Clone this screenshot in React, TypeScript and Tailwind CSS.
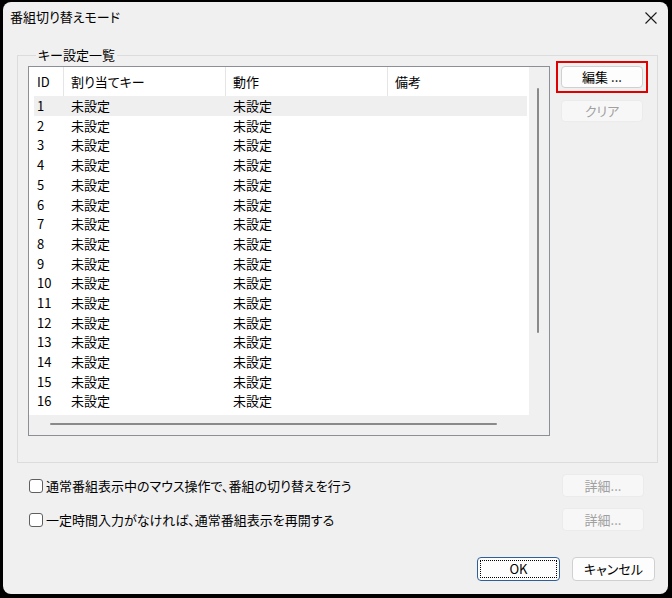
import React from 'react'

const rows = Array.from({ length: 16 }, (_, i) => ({ id: i + 1, key: '未設定', action: '未設定', note: '' }))

function Btn({ label, disabled, primary, className = '' }: { label: string; disabled?: boolean; primary?: boolean; className?: string }) {
  if (disabled) {
    return (
      <div className={`flex items-center justify-center rounded-[4px] border border-[#ebebeb] bg-[#f7f7f7] text-[#a0a0a0] ${className}`}>
        {label}
      </div>
    )
  }
  if (primary) {
    return (
      <div className={`flex items-center justify-center rounded-[4px] border border-[#2d5f9a] bg-[#fdfdfd] p-[2px] ${className}`}>
        <div className="flex h-full w-full items-center justify-center border border-dotted border-black">{label}</div>
      </div>
    )
  }
  return (
    <div className={`flex items-center justify-center rounded-[4px] border border-[#d0d0d0] bg-[#fdfdfd] ${className}`}>
      {label}
    </div>
  )
}

function Check({ label }: { label: string }) {
  return (
    <div className="flex items-center">
      <div className="h-[14px] w-[14px] rounded-[3px] border border-[#5f5f5f] bg-white" />
      <span className="ml-[3px]">{label}</span>
    </div>
  )
}

export default function App() {
  return (
    <div className="h-[598px] w-[672px] bg-black pb-[4px] pl-[3px] pr-[4px] pt-[2px] text-[13px] text-black [font-family:'Noto_Sans_CJK_JP',sans-serif] [font-feature-settings:'palt']">
      <div className="flex h-full flex-col rounded-[8px] bg-[#f0f0f0]">
        {/* Title bar */}
        <div className="flex h-[30px] items-center justify-between pl-[7px] pr-[11px]">
          <span className="text-[13px]">番組切り替えモード</span>
          <svg width="12" height="12" viewBox="0 0 12 12" className="mt-[1px]">
            <path d="M0.5 0.5 L11.5 11.5 M11.5 0.5 L0.5 11.5" stroke="#1a1a1a" strokeWidth="1.1" />
          </svg>
        </div>

        {/* Group box */}
        <fieldset className="ml-[14px] mr-[10px] mt-[15px] border border-[#dcdcdc] pb-[26px] pl-[10px]">
          <legend className="ml-[8px] px-[2px] leading-[16px]">キー設定一覧</legend>
          <div className="mt-[3px] flex">
            {/* List view */}
            <div className="grid h-[370px] w-[522px] grid-cols-[500px_20px] grid-rows-[348px_20px] border border-[#8c8f95] bg-[#f0f0f0]">
              <div className="bg-white">
                <div className="grid h-[29px] grid-cols-[35px_162px_162px_1fr] items-center">
                  <div className="flex h-full items-center border-r border-[#e5e5e5] pl-[8px]">ID</div>
                  <div className="flex h-full items-center border-r border-[#e5e5e5] pl-[7px]">割り当てキー</div>
                  <div className="flex h-full items-center border-r border-[#e5e5e5] pl-[7px]">動作</div>
                  <div className="flex h-full items-center pl-[7px]">備考</div>
                </div>
                {rows.map(r => (
                  <div
                    key={r.id}
                    className={`ml-[5px] mr-[2px] grid h-[19.7px] grid-cols-[30px_162px_162px_1fr] items-center ${r.id === 1 ? 'bg-[#efefef]' : ''}`}
                  >
                    <span className="pl-[3px]">{r.id}</span>
                    <span className="pl-[7px]">{r.key}</span>
                    <span className="pl-[7px]">{r.action}</span>
                    <span className="pl-[7px]">{r.note}</span>
                  </div>
                ))}
              </div>
              {/* vertical scrollbar */}
              <div className="pl-[8px] pt-[21px]">
                <div className="h-[245px] w-[2px] rounded-full bg-[#8a8a8a]" />
              </div>
              {/* horizontal scrollbar */}
              <div className="pl-[21px] pt-[8px]">
                <div className="h-[2px] w-[447px] rounded-full bg-[#8a8a8a]" />
              </div>
              <div />
            </div>

            {/* Side buttons */}
            <div className="ml-[11px] flex flex-col gap-[12px]">
              <div className="relative">
                <Btn label="編集 ..." className="h-[22px] w-[82px]" />
                <span className="absolute -inset-[5px] border-2 border-[#e00000]" />
              </div>
              <Btn label="クリア" disabled className="h-[22px] w-[82px]" />
            </div>
          </div>
        </fieldset>

        {/* Options */}
        <div className="mt-[11px] flex flex-col gap-[11px] pl-[26px] pr-[24px]">
          <div className="flex h-[23px] items-center justify-between">
            <Check label="通常番組表示中のマウス操作で、番組の切り替えを行う" />
            <Btn label="詳細..." disabled className="h-[23px] w-[82px]" />
          </div>
          <div className="flex h-[23px] items-center justify-between">
            <Check label="一定時間入力がなければ、通常番組表示を再開する" />
            <Btn label="詳細..." disabled className="h-[23px] w-[82px]" />
          </div>
        </div>

        {/* Dialog buttons */}
        <div className="mt-[26px] flex justify-end gap-[12px] pr-[13px]">
          <Btn label="OK" primary className="h-[24px] w-[83px]" />
          <Btn label="キャンセル" className="h-[24px] w-[83px]" />
        </div>
      </div>
    </div>
  )
}
